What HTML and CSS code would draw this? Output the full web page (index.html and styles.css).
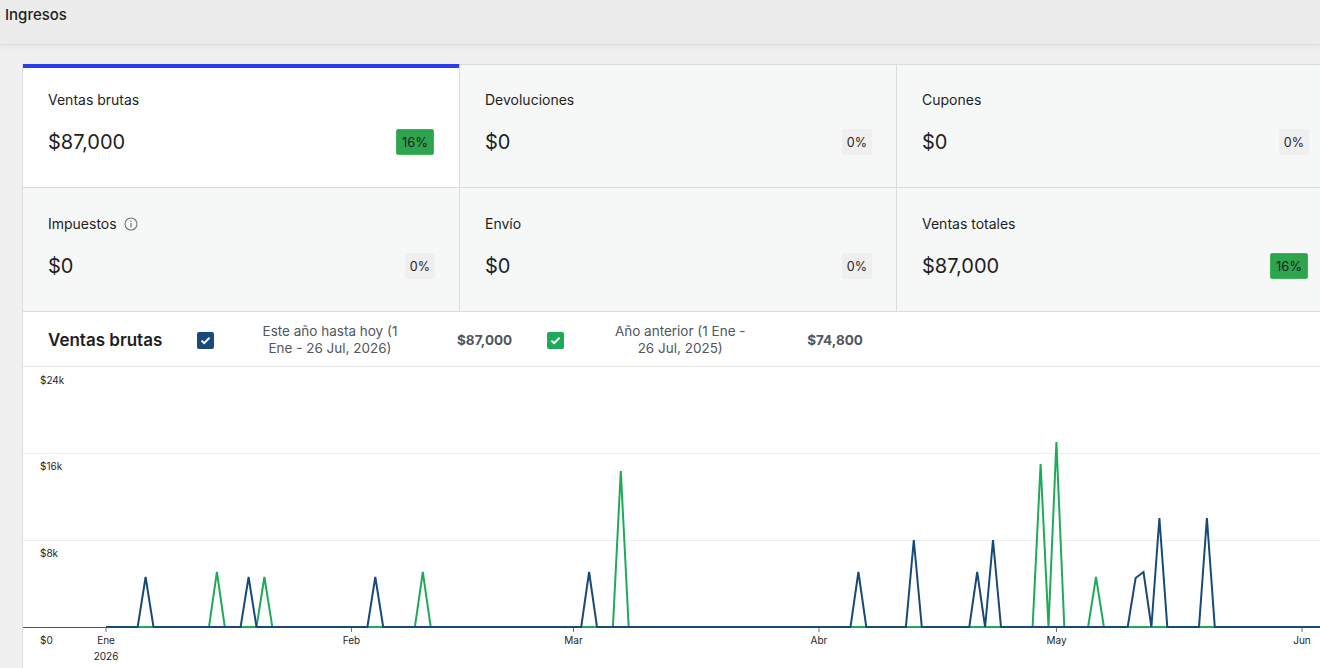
FILE: index.html
```html
<!DOCTYPE html>
<html lang="es">
<head>
    <meta charset="UTF-8">
    <meta name="viewport" content="width=device-width, initial-scale=1.0">
    <title>Ingresos</title>
    <link rel="stylesheet" href="styles.css">
</head>
<body>
    <header class="page-header">
        <h1>Ingresos</h1>
    </header>

    <main class="report">
        <!-- Summary numbers -->
        <div class="summary">
            <div class="summary-item is-selected">
                <div class="summary-label">Ventas brutas</div>
                <div class="summary-data">
                    <span class="summary-value">$87,000</span>
                    <span class="delta delta-up">16%</span>
                </div>
            </div>
            <div class="summary-item">
                <div class="summary-label">Devoluciones</div>
                <div class="summary-data">
                    <span class="summary-value">$0</span>
                    <span class="delta">0%</span>
                </div>
            </div>
            <div class="summary-item">
                <div class="summary-label">Cupones</div>
                <div class="summary-data">
                    <span class="summary-value">$0</span>
                    <span class="delta">0%</span>
                </div>
            </div>
            <div class="summary-item">
                <div class="summary-label">Impuestos
                    <svg class="info-icon" width="14" height="14" viewBox="0 0 14 14" aria-hidden="true">
                        <circle cx="7" cy="7" r="6" fill="none" stroke="#757575" stroke-width="1.1"/>
                        <rect x="6.4" y="6" width="1.2" height="4.2" fill="#757575"/>
                        <circle cx="7" cy="4.2" r="0.75" fill="#757575"/>
                    </svg>
                </div>
                <div class="summary-data">
                    <span class="summary-value">$0</span>
                    <span class="delta">0%</span>
                </div>
            </div>
            <div class="summary-item">
                <div class="summary-label">Envío</div>
                <div class="summary-data">
                    <span class="summary-value">$0</span>
                    <span class="delta">0%</span>
                </div>
            </div>
            <div class="summary-item">
                <div class="summary-label">Ventas totales</div>
                <div class="summary-data">
                    <span class="summary-value">$87,000</span>
                    <span class="delta delta-up">16%</span>
                </div>
            </div>
        </div>

        <!-- Chart -->
        <section class="chart">
            <div class="chart-legend">
                <h2 class="chart-title">Ventas brutas</h2>
                <div class="legend-item">
                    <span class="legend-box box-current">
                        <svg width="11" height="9" viewBox="0 0 11 9"><path d="M1.5 4.6 L4.2 7.2 L9.5 1.8" fill="none" stroke="#fff" stroke-width="2"/></svg>
                    </span>
                    <span class="legend-text">Este año hasta hoy (1<br>Ene - 26 Jul, 2026)</span>
                    <span class="legend-total">$87,000</span>
                </div>
                <div class="legend-item">
                    <span class="legend-box box-previous">
                        <svg width="11" height="9" viewBox="0 0 11 9"><path d="M1.5 4.6 L4.2 7.2 L9.5 1.8" fill="none" stroke="#fff" stroke-width="2"/></svg>
                    </span>
                    <span class="legend-text">Año anterior (1 Ene -<br>26 Jul, 2025)</span>
                    <span class="legend-total">$74,800</span>
                </div>
            </div>

            <svg class="chart-svg" width="1400" height="301">
                <!-- grid -->
                <line class="grid" x1="0" y1="86.5" x2="1400" y2="86.5"/>
                <line class="grid" x1="0" y1="173.5" x2="1400" y2="173.5"/>

                <!-- y axis labels -->
                <text class="axis-label" x="17" y="17">$24k</text>
                <text class="axis-label" x="17" y="103">$16k</text>
                <text class="axis-label" x="17" y="190">$8k</text>
                <text class="axis-label" x="17" y="277">$0</text>

                <!-- x axis -->
                <line class="axis" x1="0" y1="260.5" x2="1400" y2="260.5"/>
                <line class="tick" x1="83" y1="260" x2="83" y2="265"/>
                <line class="tick" x1="328.5" y1="260" x2="328.5" y2="265"/>
                <line class="tick" x1="550.5" y1="260" x2="550.5" y2="265"/>
                <line class="tick" x1="796" y1="260" x2="796" y2="265"/>
                <line class="tick" x1="1033.5" y1="260" x2="1033.5" y2="265"/>
                <line class="tick" x1="1279" y1="260" x2="1279" y2="265"/>

                <text class="axis-label tick-label" x="83" y="277">Ene</text>
                <text class="axis-label tick-label" x="83" y="293">2026</text>
                <text class="axis-label tick-label" x="328.5" y="277">Feb</text>
                <text class="axis-label tick-label" x="550.5" y="277">Mar</text>
                <text class="axis-label tick-label" x="796" y="277">Abr</text>
                <text class="axis-label tick-label" x="1033.5" y="277">May</text>
                <text class="axis-label tick-label" x="1279" y="277">Jun</text>

                <!-- previous year -->
                <polyline class="line-previous" points="83,260 186,260 193.9,205 201.8,260 233.5,260 241.4,210 249.3,260 391.9,260 399.8,205 407.7,260 589.9,260 597.8,104 605.7,260 1009.6,260 1017.6,97 1025.5,260 1033.4,75 1041.3,260 1065.1,260 1073,210 1080.9,260 1714.5,260"/>

                <!-- this year -->
                <polyline class="line-current" points="83,260 114.7,260 122.6,210 130.5,260 217.6,260 225.6,210 233.5,260 344.4,260 352.3,210 360.2,260 558.2,260 566.1,205 574,260 827.5,260 835.4,205 843.3,260 882.9,260 890.8,173 898.8,260 946.3,260 954.2,205 962.1,260 970,173 978,260 1104.7,260 1112.6,211 1120.5,205 1128.4,260 1136.4,151 1144.3,260 1176,260 1183.9,151 1191.8,260 1714.5,260"/>
            </svg>
        </section>
    </main>
</body>
</html>
```

FILE: styles.css
```css
body {
    margin: 0;
    background: #f0f0f1;
    font-family: Inter, "Noto Sans", Arial, sans-serif;
    color: #1e1e1e;
    overflow: hidden;
}

.page-header {
    height: 44px;
    box-sizing: border-box;
    padding: 5px 5px;
    background: #ececed;
    box-shadow: 0 1px 0 #dcdcde, 0 2px 6px rgba(0,0,0,0.06);
}

.page-header h1 {
    margin: 0;
    font-size: 15px;
    font-weight: 500;
    line-height: 20px;
}

.report {
    margin: 20px 0 0 22px;
    width: 1312px;
    border-left: 1px solid #dcdcde;
}

/* summary cards */
.summary {
    display: grid;
    grid-template-columns: repeat(3, 437px);
}

.summary-item {
    box-sizing: border-box;
    height: 124px;
    padding: 24px 24px 0 25px;
    background: #f6f7f7;
    border-right: 1px solid #dcdcde;
    border-bottom: 1px solid #dcdcde;
}

.summary-item:nth-child(-n+3) {
    border-top: 1px solid #dcdcde;
}

.summary-item:nth-child(n+4) {
    padding-top: 25px;
}

.summary-item:nth-child(n+4) .summary-data {
    margin-top: 17px;
}

.summary-item.is-selected {
    background: #fff;
    border-top-color: #2b3de8;
    box-shadow: inset 0 3px 0 #2b3de8;
}

.summary-label {
    display: flex;
    align-items: center;
    gap: 7px;
    font-size: 14px;
    line-height: 22px;
}

.info-icon {
    display: block;
}

.summary-data {
    display: flex;
    align-items: center;
    justify-content: space-between;
    margin-top: 17px;
    height: 28px;
}

.summary-value {
    font-size: 20px;
    line-height: 28px;
}

.delta {
    min-width: 30px;
    height: 26px;
    box-sizing: border-box;
    padding: 0 5px;
    display: flex;
    align-items: center;
    justify-content: center;
    font-size: 12.5px;
    background: #efefef;
    border-radius: 2px;
}

.delta-up {
    min-width: 36px;
    margin-right: 1px;
    font-size: 13px;
    background: #2ea44f;
    border: 1px solid #3fb35d;
}

/* chart */
.chart {
    background: #fff;
}

.chart-legend {
    display: flex;
    align-items: center;
    box-sizing: border-box;
    height: 55px;
    padding: 2px 0 0 25px;
    border-bottom: 1px solid #e6e6e6;
}

.chart-title {
    width: 149px;
    margin: 0;
    font-size: 17px;
    font-weight: 600;
}

.legend-item {
    display: flex;
    align-items: center;
    margin-right: 35px;
}

.legend-box {
    width: 17px;
    height: 17px;
    border-radius: 2px;
    display: flex;
    align-items: center;
    justify-content: center;
}

.box-current {
    background: #1a4a7a;
}

.box-previous {
    background: #1faa5a;
}

.legend-text {
    width: 160px;
    margin-left: 36px;
    text-align: center;
    font-size: 13.5px;
    line-height: 17px;
    color: #50575e;
}

.legend-total {
    margin-left: 47px;
    font-size: 13.5px;
    font-weight: 700;
    color: #50575e;
}

.chart-svg {
    display: block;
}

.grid {
    stroke: #ececec;
    stroke-width: 1;
}

.axis {
    stroke: #50575e;
    stroke-width: 1;
}

.tick {
    stroke: #757575;
    stroke-width: 1;
}

.axis-label {
    font-size: 10px;
    fill: #1e1e1e;
}

.tick-label {
    text-anchor: middle;
}

.line-previous,
.line-current {
    fill: none;
    stroke-width: 2;
    stroke-linejoin: miter;
}

.line-previous {
    stroke: #1faa5a;
}

.line-current {
    stroke: #184a78;
}
```
